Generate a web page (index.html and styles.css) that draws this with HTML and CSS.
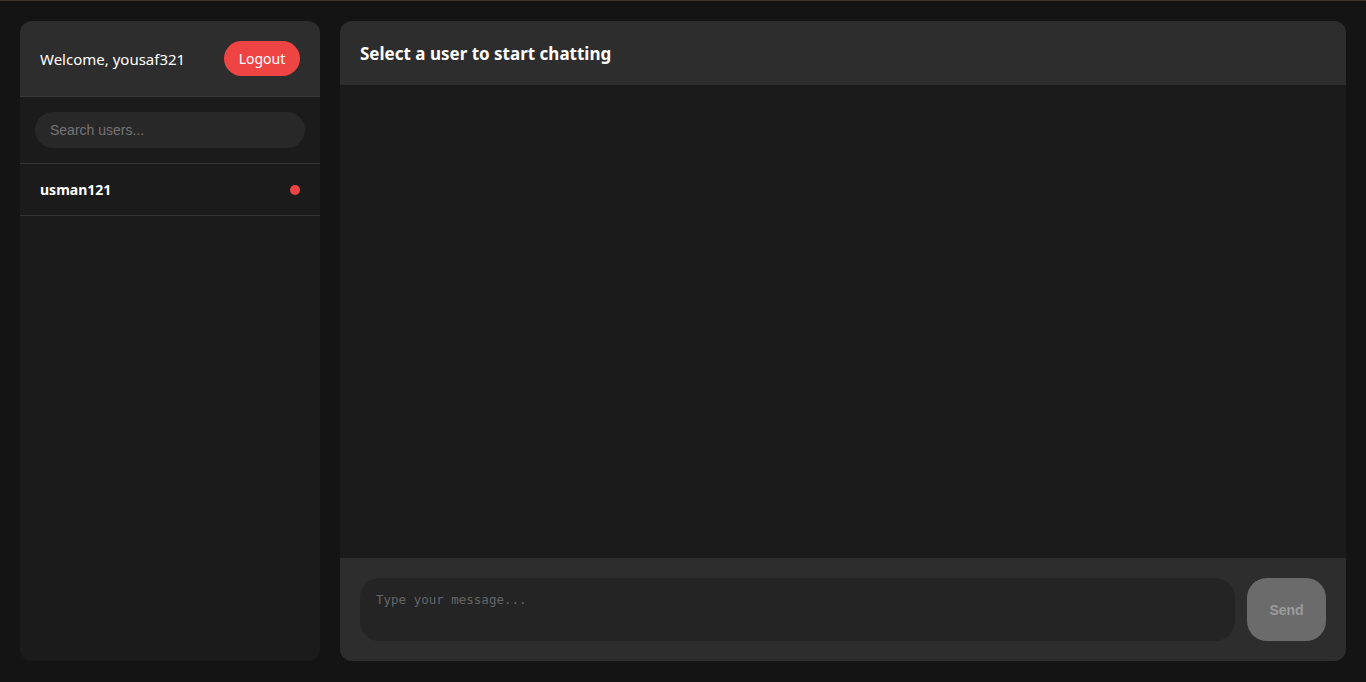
FILE: index.html
```html
<!DOCTYPE html>
<html>
<head>
<meta charset="utf-8">
<link rel="stylesheet" href="styles.css">
</head>
<body>
<div class="app">
  <aside class="sidebar">
    <div class="side-header">
      <span class="welcome">Welcome, yousaf321</span>
      <button class="logout">Logout</button>
    </div>
    <div class="search-wrap">
      <input class="search" type="text" placeholder="Search users...">
    </div>
    <ul class="users">
      <li class="user"><span class="uname">usman121</span><span class="dot"></span></li>
    </ul>
  </aside>
  <main class="chat">
    <div class="chat-header"><h2>Select a user to start chatting</h2></div>
    <div class="messages"></div>
    <div class="composer">
      <textarea class="msg" placeholder="Type your message..."></textarea>
      <button class="send">Send</button>
    </div>
  </main>
</div>
</body>
</html>
```
FILE: styles.css
```css
* { box-sizing: border-box; }
html, body { margin: 0; height: 100%; }
body {
  background: #141414;
  border-top: 1px solid #3a342c;
  font-family: "Noto Sans", "Open Sans", sans-serif;
  color: #fff;
  overflow: hidden;
}
.app {
  display: flex;
  gap: 20px;
  padding: 20px;
  height: 680px;
}
.sidebar {
  width: 300px;
  flex: none;
  background: #1b1b1b;
  border-radius: 12px;
  overflow: hidden;
  display: flex;
  flex-direction: column;
}
.side-header {
  height: 76px;
  background: #2d2d2d;
  border-bottom: 1px solid #3a3a3a;
  display: flex;
  align-items: center;
  justify-content: space-between;
  padding: 0 20px;
}
.welcome { font-size: 15px; color: #fff; }
.logout {
  background: #ef4444;
  color: #fff;
  border: none;
  border-radius: 18px;
  width: 76px;
  height: 35px;
  font-family: inherit;
  font-size: 14px;
  padding: 0;
}
.search-wrap {
  padding: 15px;
  border-bottom: 1px solid #333;
}
.search {
  width: 100%;
  height: 36px;
  border: none;
  border-radius: 18px;
  background: #282828;
  padding: 0 15px;
  font-family: "Liberation Sans", Arial, sans-serif;
  font-size: 14px;
  color: #ddd;
  outline: none;
}
.search::placeholder { color: #757575; }
.users { list-style: none; margin: 0; padding: 0; }
.user {
  height: 52px;
  display: flex;
  align-items: center;
  justify-content: space-between;
  padding: 0 20px;
  border-bottom: 1px solid #333;
}
.uname { font-weight: 700; font-size: 14px; }
.dot { width: 10px; height: 10px; border-radius: 50%; background: #ef4444; }
.chat {
  flex: 1;
  background: #1b1b1b;
  border-radius: 12px;
  overflow: hidden;
  display: flex;
  flex-direction: column;
}
.chat-header {
  height: 64px;
  background: #2d2d2d;
  display: flex;
  align-items: center;
  padding: 0 20px;
}
.chat-header h2 { margin: 0; font-size: 17px; font-weight: 700; }
.messages { flex: 1; }
.composer {
  background: #2d2d2d;
  padding: 20px;
  display: flex;
  gap: 12px;
}
.msg {
  flex: 1;
  height: 63px;
  resize: none;
  border: none;
  border-radius: 20px;
  background: #242424;
  padding: 14px 16px;
  font-family: "DejaVu Sans Mono", monospace;
  font-size: 12.5px;
  color: #ddd;
  outline: none;
}
.msg::placeholder { color: #666; }
.send {
  width: 79px;
  height: 63px;
  border: none;
  border-radius: 20px;
  background: #6b6b6b;
  color: #9c9c9c;
  font-family: "Liberation Sans", Arial, sans-serif;
  font-weight: 700;
  font-size: 14px;
}
```
